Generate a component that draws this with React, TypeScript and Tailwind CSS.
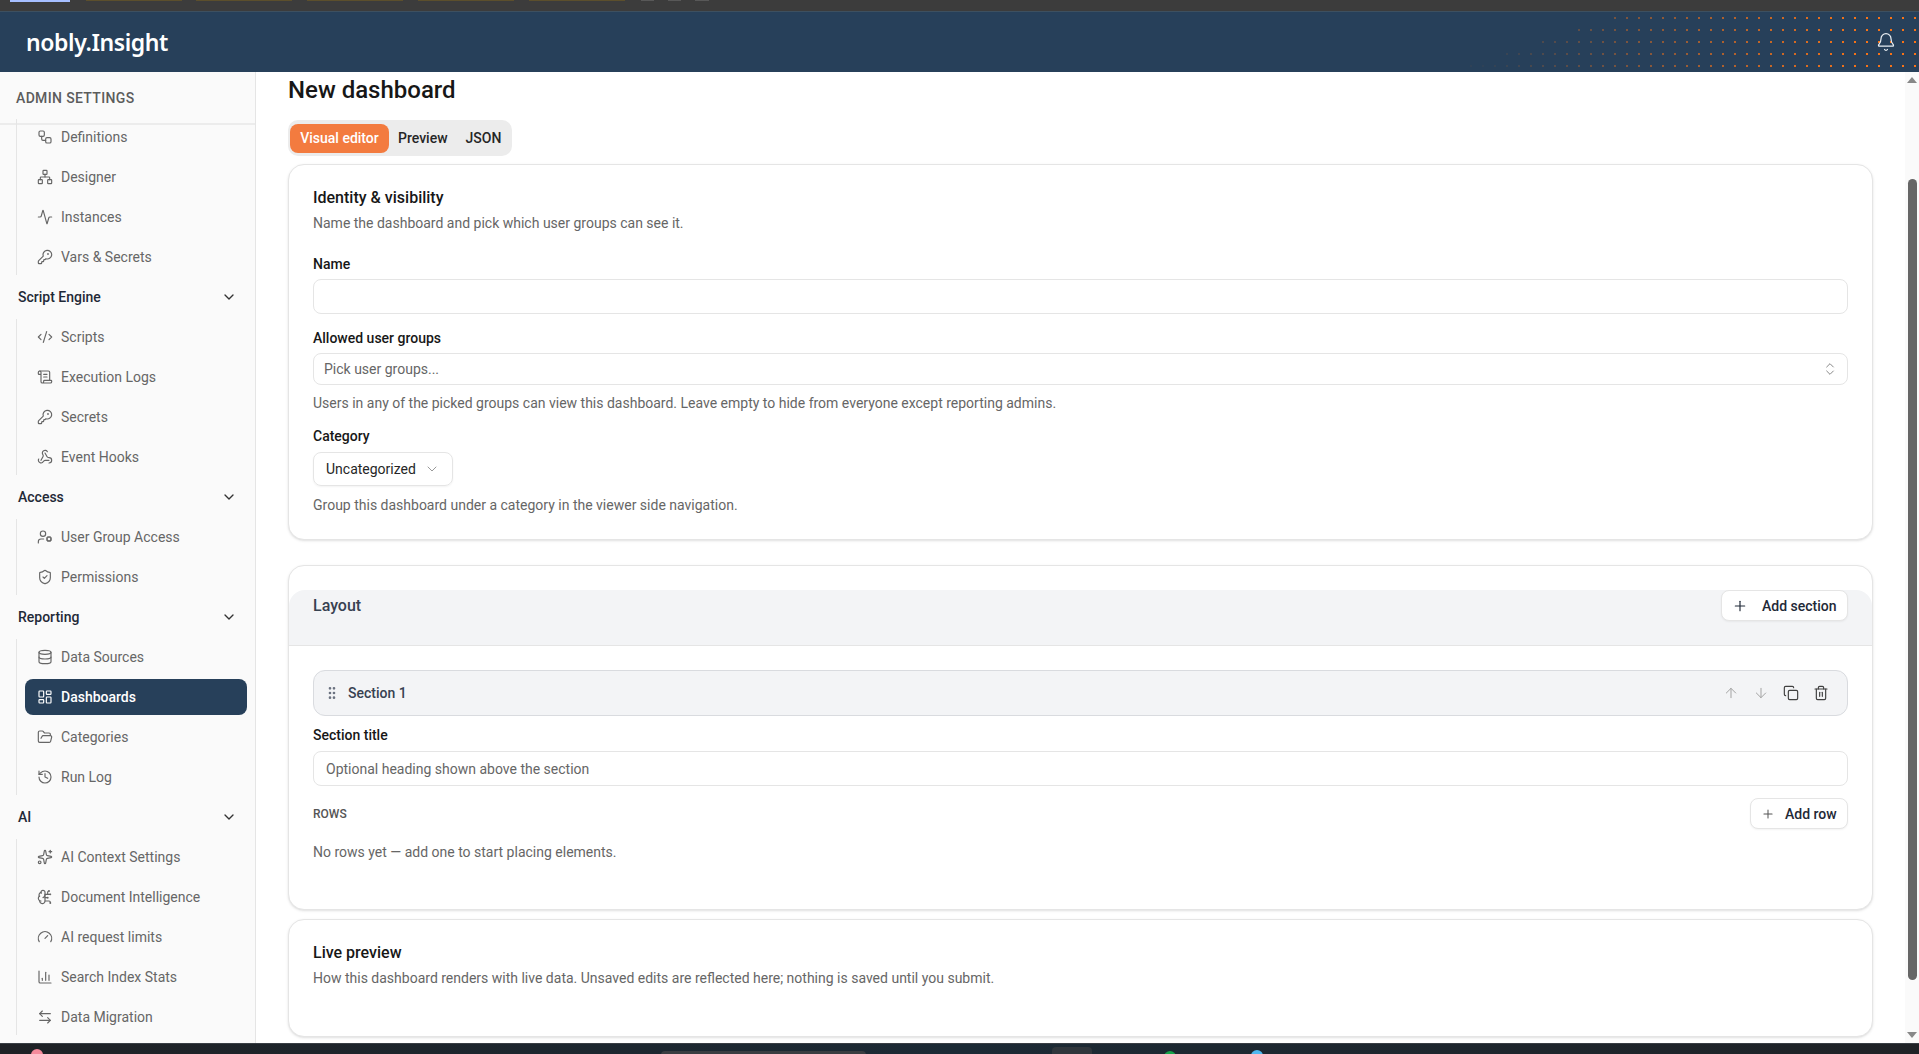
import {
  Activity, ArrowDown, ArrowLeftRight, ArrowUp, Bell, BrainCircuit, ChartColumn, ChevronDown, ChevronsUpDown,
  CodeXml, Copy, Database, FolderOpen, Gauge, GripVertical, History, KeyRound, LayoutDashboard, Network, Plus,
  ScrollText, ShieldCheck, Sparkles, Trash2, UserCog, Webhook, Workflow,
} from "lucide-react";
import type { LucideIcon } from "lucide-react";

type Item = { label: string; icon: LucideIcon; active?: boolean };

const groups: { title?: string; items: Item[] }[] = [
  {
    items: [
      { label: "Definitions", icon: Workflow },
      { label: "Designer", icon: Network },
      { label: "Instances", icon: Activity },
      { label: "Vars & Secrets", icon: KeyRound },
    ],
  },
  {
    title: "Script Engine",
    items: [
      { label: "Scripts", icon: CodeXml },
      { label: "Execution Logs", icon: ScrollText },
      { label: "Secrets", icon: KeyRound },
      { label: "Event Hooks", icon: Webhook },
    ],
  },
  {
    title: "Access",
    items: [
      { label: "User Group Access", icon: UserCog },
      { label: "Permissions", icon: ShieldCheck },
    ],
  },
  {
    title: "Reporting",
    items: [
      { label: "Data Sources", icon: Database },
      { label: "Dashboards", icon: LayoutDashboard, active: true },
      { label: "Categories", icon: FolderOpen },
      { label: "Run Log", icon: History },
    ],
  },
  {
    title: "AI",
    items: [
      { label: "AI Context Settings", icon: Sparkles },
      { label: "Document Intelligence", icon: BrainCircuit },
      { label: "AI request limits", icon: Gauge },
      { label: "Search Index Stats", icon: ChartColumn },
      { label: "Data Migration", icon: ArrowLeftRight },
    ],
  },
];

// dotted pattern in the header, each row starts further left and fades in
function HeaderDots() {
  const rows = [
    { y: 6, from: 1613 },
    { y: 18, from: 1577 },
    { y: 30, from: 1541 },
    { y: 42, from: 1505 },
    { y: 54, from: 1469 },
  ];
  const dots: { x: number; y: number; o: number }[] = [];
  rows.forEach((r) => {
    for (let x = 1914; x >= r.from; x -= 12) {
      dots.push({ x, y: r.y, o: Math.min(1, Math.max(0.04, (x - 1469) / 390)) });
    }
  });
  return (
    <svg className="absolute right-0 top-0 h-[60px] w-[460px]" viewBox="1459 0 460 60">
      {dots.map((d) => (
        <rect key={`${d.x}-${d.y}`} x={d.x} y={d.y - 1} width="2" height="2" fill="#f97316" opacity={d.o} />
      ))}
    </svg>
  );
}

function NavRow({ item }: { item: Item }) {
  const Icon = item.icon;
  return (
    <li
      className={`flex h-9 items-center gap-2 rounded-lg pl-3 text-sm leading-5 ${
        item.active ? "bg-[#27405a] font-medium text-white" : "text-[#666]"
      }`}
    >
      <Icon size={16} strokeWidth={1.75} className="shrink-0" />
      <span>{item.label}</span>
    </li>
  );
}

function Sidebar() {
  return (
    <aside className="flex w-64 shrink-0 flex-col overflow-hidden border-r border-[#e5e5e5] bg-[#fafafa]">
      <div className="flex h-[53px] shrink-0 items-center border-b-2 border-[#ececec] pl-4 text-sm font-medium tracking-[0.35px] text-[#5c5c5c]">
        ADMIN SETTINGS
      </div>
      <nav className="-mt-2 flex flex-col pr-2">
        {groups.map((g, i) => (
          <div key={i} className="flex flex-col">
            {g.title && (
              <div className="my-0.5 flex h-9 items-center justify-between pl-[18px] pr-2.5 text-sm font-medium leading-5 text-[#1f2937]">
                {g.title}
                <ChevronDown size={16} strokeWidth={2} className="text-[#333]" />
              </div>
            )}
            <ul className="my-0.5 ml-4 flex flex-col gap-1 border-l border-[#e5e5e5] pl-2">
              {g.items.map((it) => (
                <NavRow key={it.label} item={it} />
              ))}
            </ul>
          </div>
        ))}
      </nav>
    </aside>
  );
}

function Label({ children, className = "" }: { children: React.ReactNode; className?: string }) {
  return <div className={`text-sm font-medium leading-5 text-[#171717] ${className}`}>{children}</div>;
}

function Help({ children, className = "" }: { children: React.ReactNode; className?: string }) {
  return <p className={`text-sm leading-5 text-[#666] ${className}`}>{children}</p>;
}

const card = "rounded-2xl border border-[#e5e5e5] bg-white shadow-sm";

function Main() {
  return (
    <main className="min-w-0 flex-1 overflow-hidden px-8 pt-[2px]">
      <h1 className="text-2xl font-medium leading-8 text-[#171717]">New dashboard</h1>

      <div className="mt-3.5 flex h-9 w-[224px] items-center rounded-[10px] bg-[#ececec] pl-0.5 text-sm font-medium text-[#262626]">
        <span className="flex h-[29px] w-[99px] items-center justify-center rounded-lg bg-[#f37b3f] text-white">Visual editor</span>
        <span className="ml-[9px]">Preview</span>
        <span className="ml-[18px]">JSON</span>
      </div>

      <section className={`${card} mt-2 px-6 pb-6 pt-[21px]`}>
        <h2 className="text-base font-medium leading-6 text-[#171717]">Identity &amp; visibility</h2>
        <Help className="mt-[3px]">Name the dashboard and pick which user groups can see it.</Help>
        <Label className="mt-[21px]">Name</Label>
        <div className="mt-[5px] h-[35px] rounded-lg border border-[#e5e5e5] bg-white" />
        <Label className="mt-[14px]">Allowed user groups</Label>
        <div className="mt-[5px] flex h-8 items-center justify-between rounded-lg border border-[#e5e5e5] pl-[10px] pr-[9px] text-sm text-[#666]">
          Pick user groups...
          <ChevronsUpDown size={16} strokeWidth={1.5} className="text-[#888]" />
        </div>
        <Help className="mt-2">Users in any of the picked groups can view this dashboard. Leave empty to hide from everyone except reporting admins.</Help>
        <Label className="mt-[13px]">Category</Label>
        <div className="mt-1.5 flex h-[34px] w-[140px] items-center justify-between rounded-lg border border-[#e5e5e5] pl-3 pr-3 text-sm text-[#262626] shadow-xs">
          Uncategorized
          <ChevronDown size={16} strokeWidth={1.5} className="text-[#999]" />
        </div>
        <Help className="mt-[9px]">Group this dashboard under a category in the viewer side navigation.</Help>
      </section>

      <section className={`${card} mt-[25px] pt-6`}>
        <div className="flex h-14 items-start justify-between rounded-t-2xl border-b border-[#e5e5e5] bg-[#f3f4f6] pl-6 pr-6">
          <h2 className="mt-1 text-base font-medium leading-6 text-[#374151]">Layout</h2>
          <button className="flex h-[31px] w-[127px] items-center rounded-lg border border-[#e5e5e5] bg-white pl-2.5 text-sm font-medium text-[#1f2937] shadow-xs">
            <Plus size={16} strokeWidth={1.75} className="mr-[14px]" />
            Add section
          </button>
        </div>
        <div className="px-6 pb-[47px] pt-6">
          <div className="flex h-[46px] items-center rounded-xl border border-[#d9dbdf] bg-[#f3f4f6] pl-2.5 pr-[18px]">
            <GripVertical size={16} strokeWidth={2} className="text-[#6b7280]" />
            <span className="ml-[8px] text-sm font-medium text-[#374151]">Section 1</span>
            <span className="ml-auto flex items-center gap-[14px]">
              <ArrowUp size={16} strokeWidth={1.5} className="text-[#a3a3a3]" />
              <ArrowDown size={16} strokeWidth={1.5} className="text-[#a3a3a3]" />
              <Copy size={16} strokeWidth={1.75} className="text-[#404040]" />
              <Trash2 size={16} strokeWidth={1.75} className="text-[#404040]" />
            </span>
          </div>
          <Label className="mt-[9px]">Section title</Label>
          <div className="mt-[6px] flex h-[35px] items-center rounded-lg border border-[#e5e5e5] pl-3 text-sm text-[#666]">
            Optional heading shown above the section
          </div>
          <div className="mt-3 flex items-center justify-between">
            <span className="text-xs font-medium text-[#555]">ROWS</span>
            <button className="flex h-[31px] w-[98px] items-center rounded-lg border border-[#e5e5e5] bg-white pl-2.5 text-sm font-medium text-[#1f2937] shadow-xs">
              <Plus size={14} strokeWidth={1.75} className="mr-[10px] text-[#555]" />
              Add row
            </button>
          </div>
          <Help className="mt-[13px]">No rows yet — add one to start placing elements.</Help>
        </div>
      </section>

      <section className={`${card} mt-[9px] px-6 pb-12 pt-[21px]`}>
        <h2 className="text-base font-medium leading-6 text-[#171717]">Live preview</h2>
        <Help className="mt-[3px]">How this dashboard renders with live data. Unsaved edits are reflected here; nothing is saved until you submit.</Help>
      </section>
    </main>
  );
}

function Scrollbar() {
  return (
    <div className="flex w-[14px] shrink-0 flex-col items-center bg-[#fafafa]">
      <div className="mt-[5px] h-0 w-0 border-x-[5px] border-b-[6px] border-x-transparent border-b-[#888]" />
      <div className="mt-[96px] h-[801px] w-[9px] rounded-full bg-[#666]" />
      <div className="mt-[52px] h-0 w-0 border-x-[5px] border-t-[6px] border-x-transparent border-t-[#888]" />
    </div>
  );
}

export default function App() {
  return (
    <div className="flex h-[1054px] w-[1919px] flex-col overflow-hidden bg-white font-['Roboto',sans-serif]">
      {/* browser strip */}
      <div className="flex h-3 shrink-0 items-start border-b border-[#3d5060] bg-[#3c3c3c]">
        <span className="ml-[10px] h-[2px] w-[60px] bg-[#a6bfff]" />
        <span className="ml-[16px] h-px w-[96px] bg-[#5c4f2c]" />
        <span className="ml-[14px] h-px w-[96px] bg-[#5c4f2c]" />
        <span className="ml-[15px] h-px w-[96px] bg-[#5c4f2c]" />
        <span className="ml-[15px] h-px w-[96px] bg-[#5c4f2c]" />
        <span className="ml-[15px] h-px w-[96px] bg-[#5c4f2c]" />
        <span className="ml-[16px] h-px w-[13px] bg-[#585858]" />
        <span className="ml-[14px] h-px w-[13px] bg-[#585858]" />
        <span className="ml-[14px] h-px w-[14px] bg-[#585858]" />
      </div>

      <header className="relative flex h-[60px] shrink-0 items-center justify-between bg-[#27405a] pl-[26px] pr-[23px] text-white">
        <HeaderDots />
        <span className="font-['Noto_Sans',sans-serif] text-[23px] font-semibold leading-none tracking-[-0.4px]">nobly.Insight</span>
        <Bell size={20} strokeWidth={1.5} className="relative text-[#e8edf2]" />
      </header>

      <div className="flex min-h-0 flex-1">
        <Sidebar />
        <Main />
        <Scrollbar />
      </div>

      {/* taskbar strip */}
      <div className="flex h-[11px] shrink-0 items-start overflow-hidden border-t border-[#3a3f45] bg-gradient-to-r from-[#1e2125] via-[#1c2a35] to-[#1f2226]">
        <span className="ml-[31px] mt-[5px] h-3 w-3 rounded-full bg-[#f58a9b]" />
        <span className="ml-[618px] mt-[7px] h-3 w-[205px] rounded-t bg-[#3a3d41]" />
        <span className="ml-[186px] mt-[3px] h-3 w-[40px] rounded-t bg-[#30363c]" />
        <span className="ml-[72px] mt-[7px] h-3 w-3 rounded-full bg-[#16a34a]" />
        <span className="ml-[75px] mt-[6px] h-3 w-3 rounded-full bg-[#4fb8f0]" />
      </div>
    </div>
  );
}
